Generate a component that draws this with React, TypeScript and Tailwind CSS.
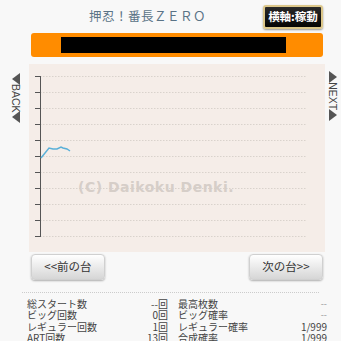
import React from "react";

const ticks = Array.from({ length: 11 }, (_, i) => 12 + i * 16);

const stats = [
  ["総スタート数", "--回", "最高枚数", "--"],
  ["ビッグ回数", "0回", "ビッグ確率", "--"],
  ["レギュラー回数", "1回", "レギュラー確率", "1/999"],
  ["ART回数", "13回", "合成確率", "1/999"],
];

function Arrows({ dir, label }: { dir: "left" | "right"; label: string }) {
  const tri = dir === "left" ? "M8 0 L0 6 L8 12 Z" : "M0 0 L8 6 L0 12 Z";
  return (
    <div className="flex flex-col items-center">
      <svg width="8" height="12" viewBox="0 0 8 12">
        <path d={tri} fill="#555" />
      </svg>
      <div className="h-[26px] flex items-center justify-center">
        <span className="rotate-90 text-[10.5px] leading-none text-[#444] font-['Liberation_Sans',sans-serif]">
          {label}
        </span>
      </div>
      <svg width="8" height="12" viewBox="0 0 8 12">
        <path d={tri} fill="#555" />
      </svg>
    </div>
  );
}

export default function App() {
  return (
    <div className="w-[341px] h-[341px] overflow-hidden bg-[#f8f8f8] font-['Noto_Sans_CJK_JP',sans-serif]">
      {/* header */}
      <div className="flex items-start h-[33px] pt-[5px]">
        <div className="pl-[89px] pt-[3px] text-[12.5px] leading-[16px] text-[#5a7386] tracking-[0.5px]">
          押忍！番長ＺＥＲＯ
        </div>
        <div className="ml-auto mr-[18px] w-[60px] h-[24px] rounded-[3px] border-2 border-[#dcc78a] bg-gradient-to-b from-[#2a2a2a] to-[#050505] flex items-center justify-center text-[11.5px] font-bold text-white shadow-[0_1px_2px_rgba(0,0,0,0.4)]">
          横軸:稼動
        </div>
      </div>

      {/* orange bar */}
      <div className="ml-[31px] w-[292px] h-[24px] rounded-[3px] bg-[#ff8c00] pt-[4px] pl-[30px]">
        <div className="w-[225px] h-[16px] bg-black" />
      </div>

      {/* chart row */}
      <div className="flex mt-[7px]">
        <div className="w-[29px] flex justify-end pt-[9px]">
          <div className="-mr-[1px]">
            <Arrows dir="left" label="BACK" />
          </div>
        </div>
        <div className="relative w-[296px] h-[188px] bg-[#f5ede8]">
          <svg width="296" height="188" viewBox="0 0 296 188" className="block">
            {ticks.map((y) =>
              y === 93 ? (
                <line key={y} x1="11" y1={y} x2="278" y2={y} stroke="#8a8480" strokeWidth="1" />
              ) : (
                <line key={y} x1="11" y1={y + 0.5} x2="278" y2={y + 0.5} stroke="#d9d2cc" strokeWidth="1" strokeDasharray="1.5 1.5" />
              )
            )}
            {ticks.map((y) => (
              <line key={"t" + y} x1="6" y1={y + 0.5} x2="11" y2={y + 0.5} stroke="#555" strokeWidth="1" />
            ))}
            <line x1="11.5" y1="12" x2="11.5" y2="173" stroke="#555" strokeWidth="1" />
            <polyline
              points="12,94 20,84 24,85 28,85 32,83 34,84 38,85 41,87"
              fill="none"
              stroke="#5ab0d8"
              strokeWidth="1.5"
            />
          </svg>
          <div className="absolute left-[49px] top-[115px] text-[14px] leading-[16px] font-bold tracking-[0.5px] text-[#d6cec8] font-['DejaVu_Sans',sans-serif]">
            (C) Daikoku Denki.
          </div>
        </div>
        <div className="w-[16px] pt-[7px] pl-[0px]">
          <Arrows dir="right" label="NEXT" />
        </div>
      </div>

      {/* buttons */}
      <div className="flex justify-between pl-[31px] pr-[18px] mt-[2px]">
        {["<<前の台", "次の台>>"].map((t) => (
          <button
            key={t}
            className="w-[74px] h-[26px] rounded-[4px] bg-gradient-to-b from-white to-[#d6d6d6] border border-[#d0d0d0] shadow-[0_1px_2px_rgba(0,0,0,0.3)] text-[11.5px] text-[#333] flex items-center justify-center"
          >
            {t}
          </button>
        ))}
      </div>

      {/* separator */}
      <div className="mx-[22px] mt-[12px] border-t border-dotted border-[#ccc]" />

      {/* stats */}
      <div className="pt-[5px] pl-[27px] pr-[14px] text-[10px] leading-[11.4px] text-[#444]">
        {stats.map(([a, b, c, d]) => (
          <div key={a} className="flex h-[11.4px]">
            <div className="w-[141px] flex justify-between">
              <span>{a}</span>
              <span>{b}</span>
            </div>
            <div className="ml-[10px] flex-1 flex justify-between">
              <span>{c}</span>
              <span className={d === "--" ? "text-[#999] text-[9px]" : ""}>{d}</span>
            </div>
          </div>
        ))}
      </div>
    </div>
  );
}
